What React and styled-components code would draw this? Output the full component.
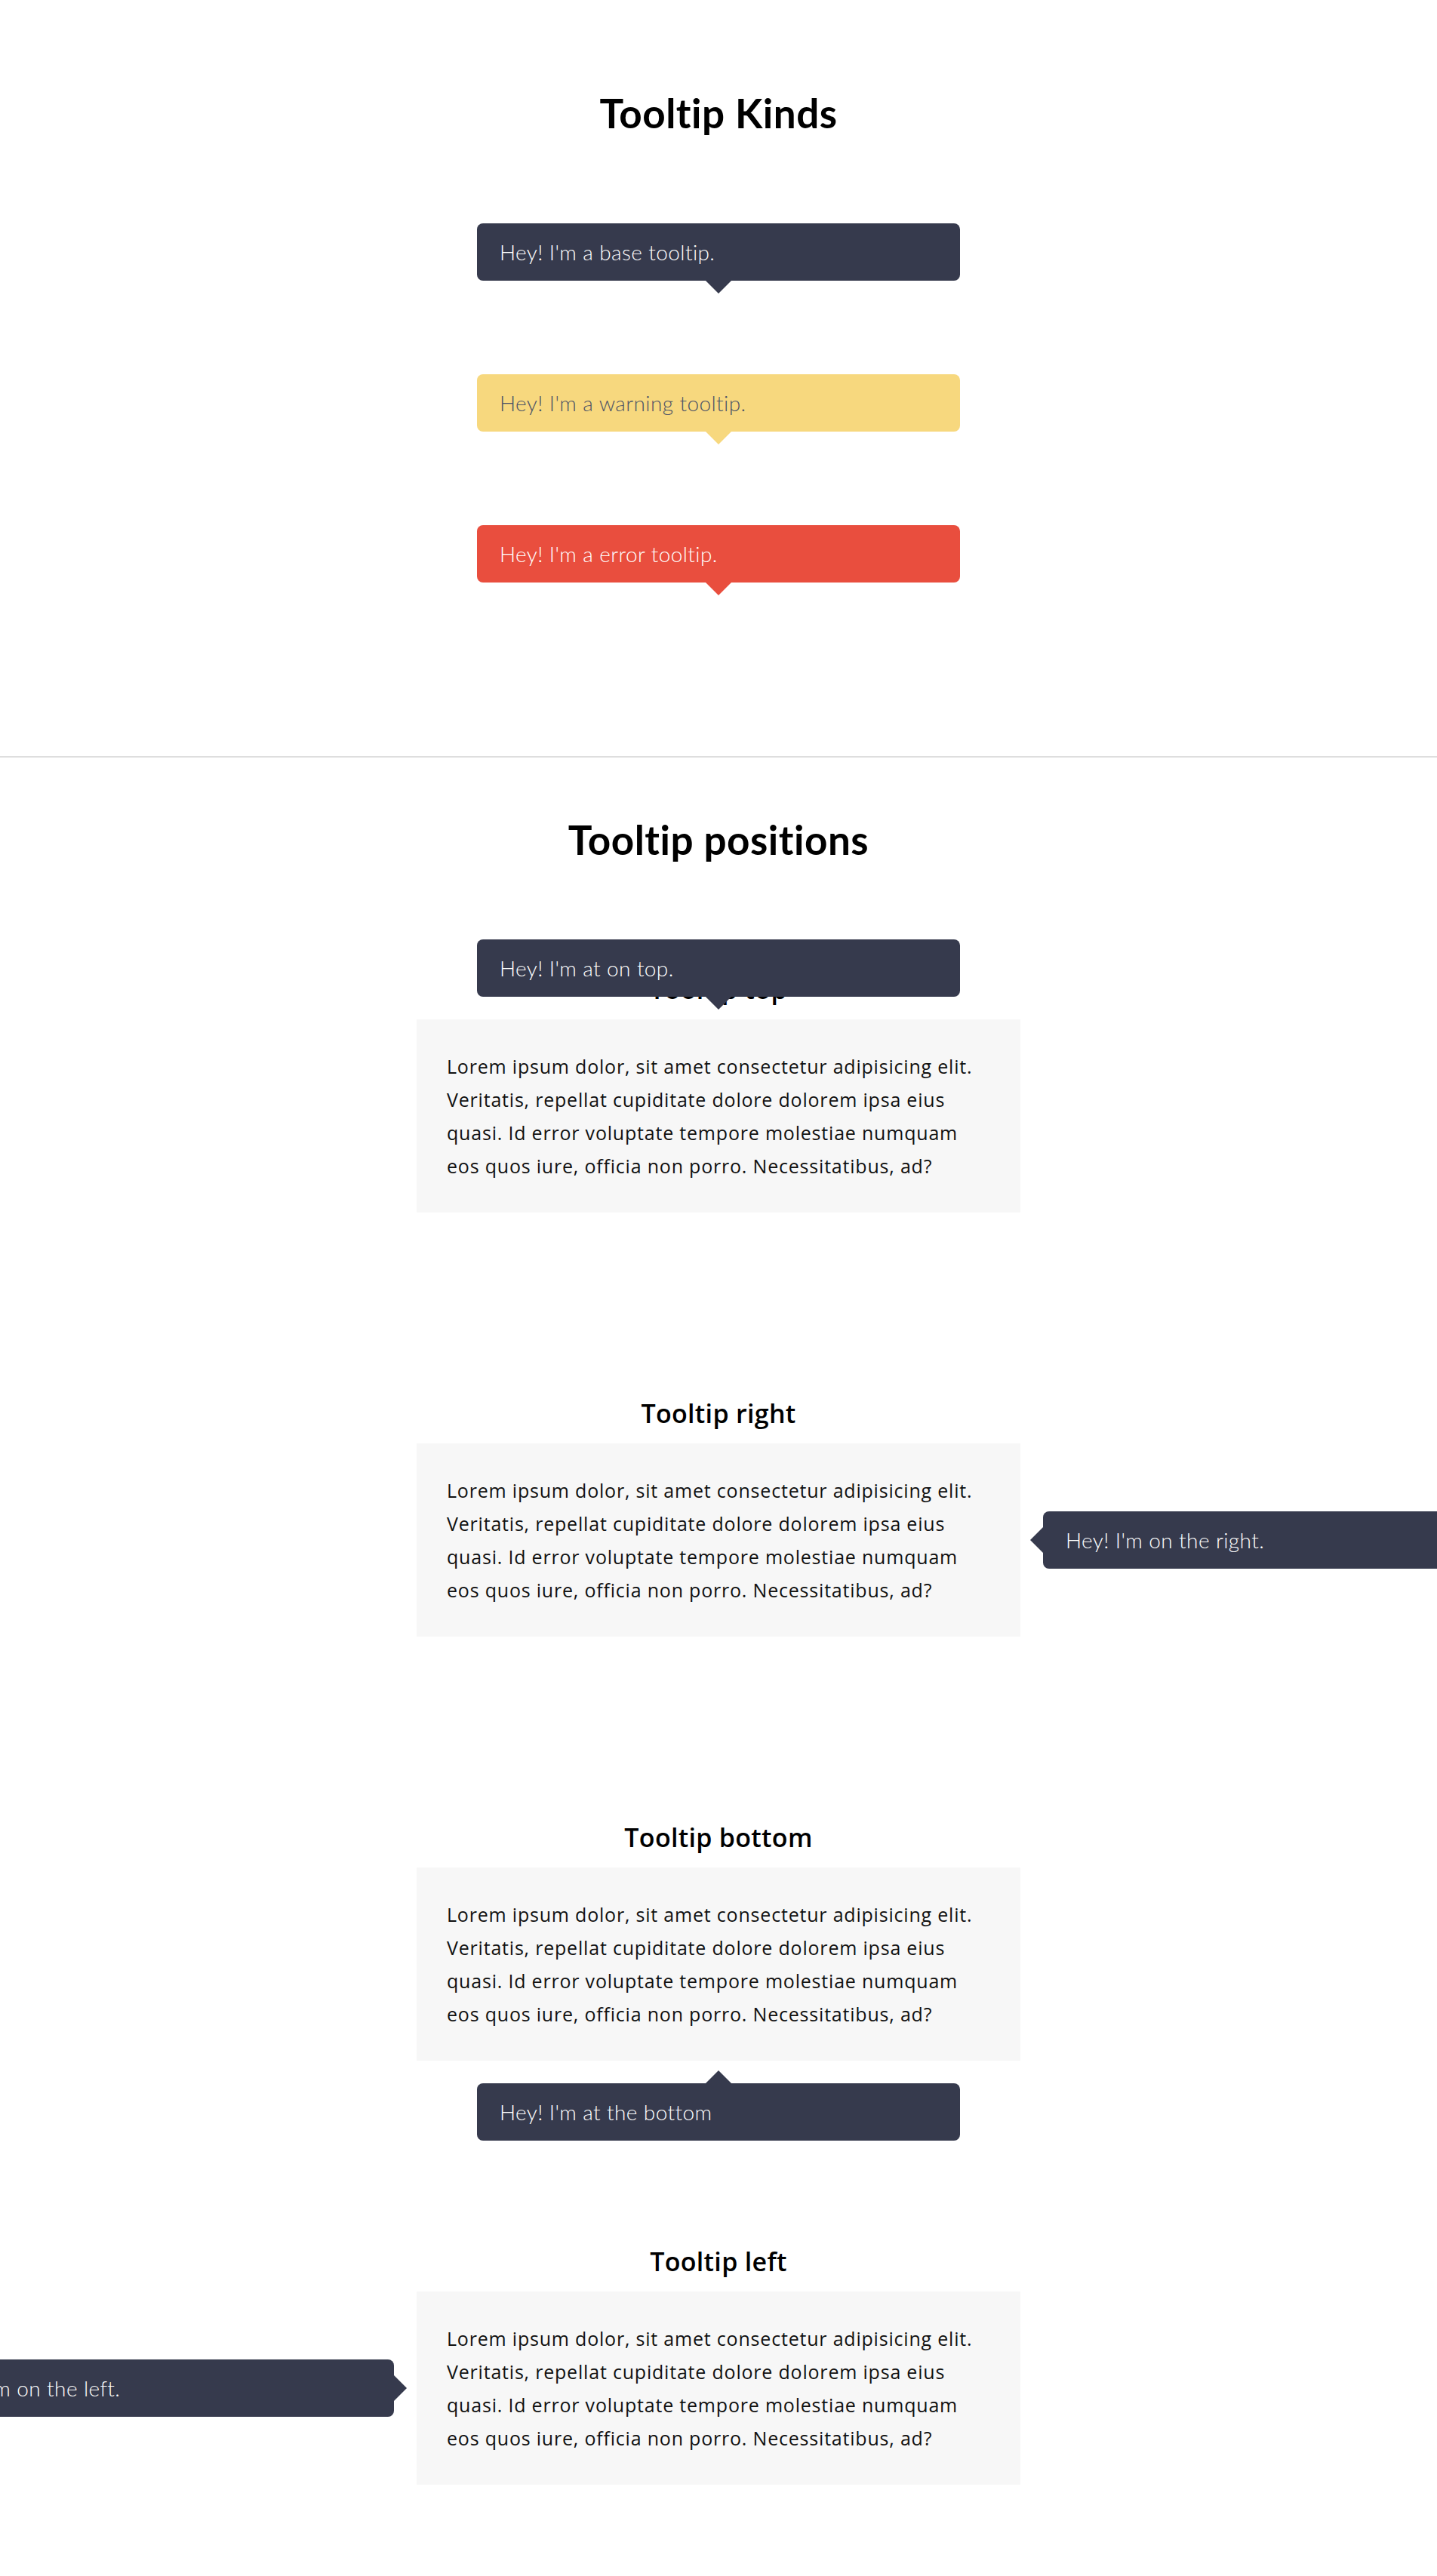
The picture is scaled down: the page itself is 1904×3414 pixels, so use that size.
import React from 'react';
import styled, { createGlobalStyle, css } from 'styled-components';

const GlobalStyle = createGlobalStyle`
  *, *::before, *::after { box-sizing: border-box; }
  html, body { margin: 0; padding: 0; background: #ffffff; }
  body {
    font-family: Lato, "Noto Sans", "Liberation Sans", sans-serif;
    color: #111111;
  }
`;

const palette = {
  base: { bg: '#363a4d', fg: '#ffffff' },
  warning: { bg: '#f7d87e', fg: '#4d5366' },
  error: { bg: '#e94e3e', fg: '#ffffff' },
};

const ARROW = 17;

const arrowPlacement = {
  down: css`
    top: 100%;
    left: 50%;
    margin-left: -${ARROW}px;
    border-bottom-width: 0;
    border-top-color: var(--tip-bg);
  `,
  up: css`
    bottom: 100%;
    left: 50%;
    margin-left: -${ARROW}px;
    border-top-width: 0;
    border-bottom-color: var(--tip-bg);
  `,
  left: css`
    right: 100%;
    top: 50%;
    margin-top: -${ARROW}px;
    border-left-width: 0;
    border-right-color: var(--tip-bg);
  `,
  right: css`
    left: 100%;
    top: 50%;
    margin-top: -${ARROW}px;
    border-right-width: 0;
    border-left-color: var(--tip-bg);
  `,
};

const Tooltip = styled.div`
  --tip-bg: ${(p) => palette[p.$kind || 'base'].bg};
  position: relative;
  width: 640px;
  padding: 20px 30px;
  border-radius: 8px;
  background: var(--tip-bg);
  color: ${(p) => palette[p.$kind || 'base'].fg};
  font-family: Lato, "Open Sans", sans-serif;
  font-size: 28px;
  line-height: 36px;
  font-weight: 300;
  letter-spacing: 0.4px;
  white-space: nowrap;

  &::after {
    content: '';
    position: absolute;
    width: 0;
    height: 0;
    border: ${ARROW}px solid transparent;
    ${(p) => arrowPlacement[p.$arrow || 'down']}
  }
`;

const placement = {
  top: css`
    bottom: calc(100% + 30px);
    left: 50%;
    transform: translateX(-50%);
  `,
  bottom: css`
    top: calc(100% + 30px);
    left: 50%;
    transform: translateX(-50%);
  `,
  right: css`
    left: calc(100% + 30px);
    top: 50%;
    transform: translateY(-50%);
  `,
  left: css`
    right: calc(100% + 30px);
    top: 50%;
    transform: translateY(-50%);
  `,
};

const PlacedTooltip = styled(Tooltip)`
  position: absolute;
  z-index: 2;
  ${(p) => placement[p.$placement]}
`;

const Page = styled.main`
  width: 100%;
  overflow: hidden;
`;

const KindsSection = styled.section`
  display: flex;
  flex-direction: column;
  align-items: center;
  padding: 118px 0 230px;
  border-bottom: 2px solid #dedede;
`;

const PositionsSection = styled.section`
  display: flex;
  flex-direction: column;
  align-items: center;
  padding: 77px 0 100px;
`;

const PageTitle = styled.h1`
  margin: 0;
  font-family: Lato, "Open Sans", sans-serif;
  font-size: 53px;
  line-height: 64px;
  font-weight: 700;
  letter-spacing: 0.5px;
  color: #000000;
  text-align: center;
`;

const KindList = styled.div`
  display: flex;
  flex-direction: column;
  gap: 124px;
  margin-top: 114px;
`;

const DemoList = styled.div`
  display: flex;
  flex-direction: column;
  gap: 246px;
  margin-top: 146px;
`;

const Demo = styled.div`
  display: flex;
  flex-direction: column;
  align-items: center;
`;

const DemoTitle = styled.h3`
  margin: 0 0 20px;
  font-family: "Open Sans", Lato, sans-serif;
  font-size: 34px;
  line-height: 40px;
  font-weight: 600;
  letter-spacing: 0.3px;
  color: #000000;
  text-align: center;
`;

const Target = styled.div`
  position: relative;
  width: 800px;
  padding: 40px;
  background: #f7f7f7;
  font-family: "Open Sans", Lato, sans-serif;
  font-size: 25px;
  line-height: 44px;
  font-weight: 400;
  letter-spacing: 0.8px;
  color: #111111;
`;

const Line = styled.span`
  display: block;
  white-space: nowrap;
`;

const LOREM_LINES = [
  'Lorem ipsum dolor, sit amet consectetur adipisicing elit.',
  'Veritatis, repellat cupiditate dolore dolorem ipsa eius',
  'quasi. Id error voluptate tempore molestiae numquam',
  'eos quos iure, officia non porro. Necessitatibus, ad?',
];

const kinds = [
  { kind: 'base', text: "Hey! I'm a base tooltip." },
  { kind: 'warning', text: "Hey! I'm a warning tooltip." },
  { kind: 'error', text: "Hey! I'm a error tooltip." },
];

const positions = [
  { title: 'Tooltip top', placement: 'top', arrow: 'down', text: "Hey! I'm at on top." },
  { title: 'Tooltip right', placement: 'right', arrow: 'left', text: "Hey! I'm on the right." },
  { title: 'Tooltip bottom', placement: 'bottom', arrow: 'up', text: "Hey! I'm at the bottom" },
  { title: 'Tooltip left', placement: 'left', arrow: 'right', text: "Hey! I'm on the left." },
];

export default function App() {
  return (
    <Page>
      <GlobalStyle />
      <KindsSection>
        <PageTitle>Tooltip Kinds</PageTitle>
        <KindList>
          {kinds.map((k) => (
            <Tooltip key={k.kind} $kind={k.kind} $arrow="down">
              {k.text}
            </Tooltip>
          ))}
        </KindList>
      </KindsSection>
      <PositionsSection>
        <PageTitle>Tooltip positions</PageTitle>
        <DemoList>
          {positions.map((p) => (
            <Demo key={p.placement}>
              <DemoTitle>{p.title}</DemoTitle>
              <Target>
                {LOREM_LINES.map((line) => (
                  <Line key={line}>{line}</Line>
                ))}
                <PlacedTooltip $kind="base" $placement={p.placement} $arrow={p.arrow}>
                  {p.text}
                </PlacedTooltip>
              </Target>
            </Demo>
          ))}
        </DemoList>
      </PositionsSection>
    </Page>
  );
}
